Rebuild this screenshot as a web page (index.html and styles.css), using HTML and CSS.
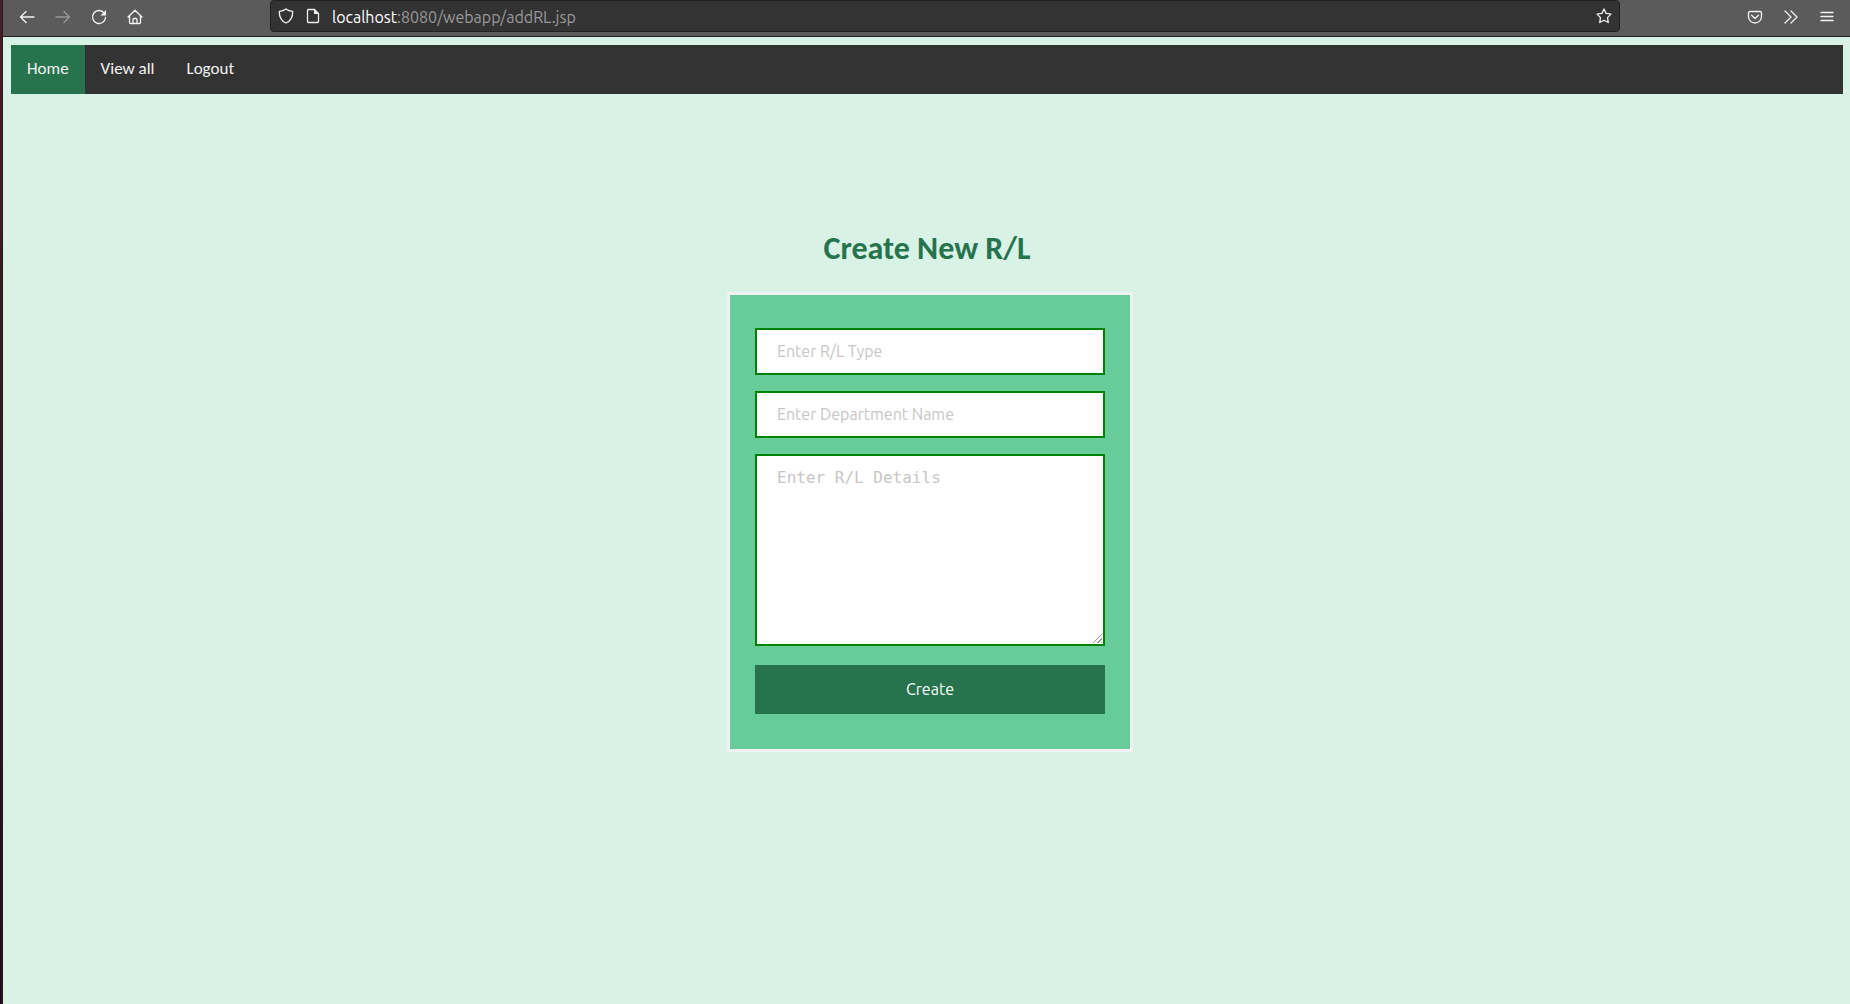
FILE: index.html
```html
<!DOCTYPE html>
<html lang="en">
<head>
<meta charset="utf-8">
<title>Create New R/L</title>
<link rel="stylesheet" href="styles.css">
</head>
<body>
<div class="window">
  <header class="toolbar">
    <button class="tool" type="button" aria-label="Back"><svg viewBox="0 0 16 16"><path d="M15 8H1.500M7 2.500L1.500 8L7 13.500"/></svg></button>
    <button class="tool" type="button" aria-label="Forward" disabled><svg viewBox="0 0 16 16"><path d="M1 8h13.500M9 2.500L14.500 8L9 13.500"/></svg></button>
    <button class="tool" type="button" aria-label="Reload"><svg viewBox="0 0 16 16"><path d="M13.300 4.200A6.500 6.500 0 1 0 14.500 8.500"/><path class="solid" d="M15 1v5.500H9.500z"/></svg></button>
    <button class="tool" type="button" aria-label="Home page"><svg viewBox="0 0 16 16"><path d="M1 8L8 1.200L15 8M2.500 7v6.500a1 1 0 0 0 1 1h9a1 1 0 0 0 1-1V7M6 14.500V10.500a1 1 0 0 1 1-1h2a1 1 0 0 1 1 1v4"/></svg></button>
    <div class="address">
      <svg class="glyph" viewBox="0 0 16 16"><path d="M8 1C6.500 2.200 3.800 3.200 1.300 3.400C1.200 8.500 3 12.800 8 15C13 12.800 14.800 8.500 14.700 3.400C12.200 3.200 9.500 2.200 8 1z"/></svg>
      <svg class="glyph" viewBox="0 0 16 16"><path d="M3.500 1.500H9.500L13.500 5.500V13.500a1 1 0 0 1-1 1h-9a1 1 0 0 1-1-1v-11a1 1 0 0 1 1-1z"/><path class="solid" d="M9 1.500V6h4.500z"/></svg>
      <span class="url"><span class="host">localhost</span>:8080/webapp/addRL.jsp</span>
      <button class="star" type="button" aria-label="Bookmark this page"><svg class="glyph" viewBox="0 0 16 16"><path d="M8 1L10.100 5.400L15 6.100L11.500 9.600L12.300 14.500L8 12.200L3.700 14.500L4.500 9.600L1 6.100L5.900 5.400z"/></svg></button>
    </div>
    <button class="tool" type="button" aria-label="Save to Pocket"><svg viewBox="0 0 16 16"><path d="M3 2.500h10a1.500 1.500 0 0 1 1.500 1.500v3.500a6.500 6.500 0 0 1-13 0V4A1.500 1.500 0 0 1 3 2.500zM4.500 6.200L8 9.500L11.500 6.200"/></svg></button>
    <button class="tool" type="button" aria-label="More tools"><svg viewBox="0 0 16 16"><path d="M2 2l6 6l-6 6M8 2l6 6l-6 6"/></svg></button>
    <button class="tool" type="button" aria-label="Menu"><svg viewBox="0 0 16 16"><path d="M2 3.500h12M2 7.500h12M2 11.500h12"/></svg></button>
  </header>
  <div class="page">
    <nav class="nav">
      <a class="active" href="#home">Home</a>
      <a href="#all">View all</a>
      <a href="#logout">Logout</a>
    </nav>
    <main class="content">
      <h1>Create New R/L</h1>
      <form class="card">
        <input type="text" aria-label="R/L type" placeholder="Enter R/L Type">
        <input type="text" aria-label="Department name" placeholder="Enter Department Name">
        <textarea aria-label="R/L details" placeholder="Enter R/L Details"></textarea>
        <button class="submit" type="button">Create</button>
      </form>
    </main>
  </div>
</div>
</body>
</html>
```
FILE: styles.css
```css
* {
  box-sizing: border-box;
}

body {
  margin: 0;
  background: #d8f2e5;
  font-family: Carlito, Lato, sans-serif;
}

.window {
  min-height: 100vh;
  padding-left: 3px;
  background: linear-gradient(90deg, transparent 2px, #241a20 2px, #241a20 3px, #d8f2e5 3px), linear-gradient(#481e27, #200c1e);
}

.toolbar {
  display: flex;
  align-items: flex-start;
  height: 37px;
  padding: 0 5px 0 6px;
  background: #5b5b5b;
  border-bottom: 1px solid #222;
}

.tool {
  display: grid;
  place-items: center;
  flex: none;
  width: 36px;
  height: 33px;
  padding: 0;
  border: 0;
  background: none;
  color: #f4f4f4;
}

.tool:disabled {
  color: #969696;
}

svg {
  width: 16px;
  height: 16px;
  fill: none;
  stroke: currentColor;
  stroke-width: 1.3;
  stroke-linecap: round;
  stroke-linejoin: round;
}

.solid {
  fill: currentColor;
  stroke: none;
}

.address {
  display: flex;
  align-items: center;
  flex: 1;
  gap: 11px;
  height: 32px;
  margin: 0 117px;
  padding: 0 7px;
  background: #333;
  border: 1px solid #222;
  border-radius: 4px;
  color: #f0f0f0;
}

.glyph {
  display: block;
  flex: none;
}

.url {
  flex: 1;
  padding-top: 2px;
  color: #9a9a9a;
  font: 16px "Ubuntu", "Noto Sans", sans-serif;
}

.host {
  color: #fff;
}

.star {
  padding: 0;
  border: 0;
  background: none;
  color: inherit;
}

.page {
  padding: 8px 7px 8px 8px;
}

.nav {
  display: flex;
  height: 49px;
  background: #333;
}

.nav a {
  padding: 14px 16px;
  color: #f2f2f2;
  font-size: 17px;
  line-height: 20px;
  text-decoration: none;
}

.nav .active {
  background: #26734d;
}

.content {
  width: 400px;
  margin: 135px auto 0;
}

h1 {
  margin: 0 0 23px;
  color: #26734d;
  font-size: 32px;
  line-height: 40px;
  text-align: center;
}

.card {
  box-sizing: content-box;
  display: flex;
  flex-direction: column;
  gap: 16px;
  width: 350px;
  padding: 33px 25px 35px;
  background: #66cc99;
  border: 3px solid #f1f1f1;
}

.card input,
.card textarea {
  display: block;
  width: 100%;
  height: 47px;
  margin: 0;
  padding: 11px 20px 13px;
  border: 2px solid green;
  border-radius: 0;
  background: #fff;
  font: 16px "Ubuntu", "Noto Sans", sans-serif;
}

.card textarea {
  height: 192px;
  padding: 12px 20px;
  font-family: "DejaVu Sans Mono", monospace;
}

textarea::-webkit-resizer {
  border: solid #fff;
  border-width: 0 1px 1px 0;
  background: linear-gradient(135deg, #fff 55%, transparent 55%), repeating-linear-gradient(135deg, #fff 0 1px, #999 1px 2px, #fff 2px 3px);
}

::placeholder {
  color: #c6c6c6;
  opacity: 1;
}

.submit {
  height: 49px;
  margin-top: 3px;
  padding: 0 0 2px;
  border: 0;
  background: #26734d;
  color: #fff;
  font: 16px "Ubuntu", "Noto Sans", sans-serif;
}
```
